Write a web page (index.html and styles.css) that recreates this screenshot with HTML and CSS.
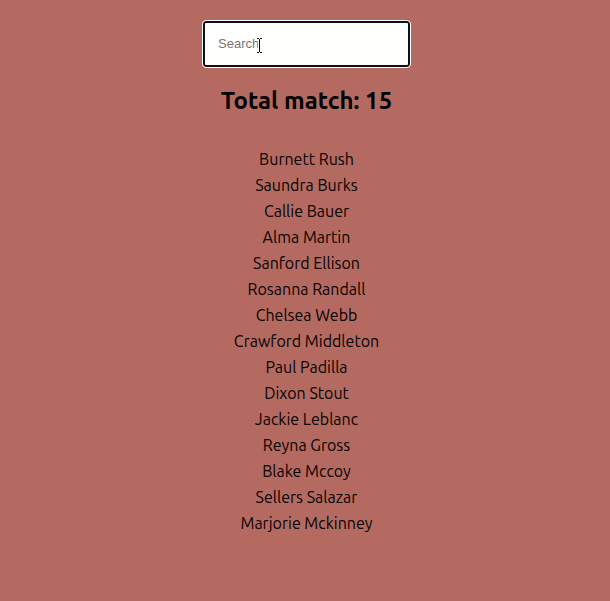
FILE: index.html
```html
<!DOCTYPE html>
<html lang="en">
<head>
<meta charset="utf-8">
<title>Search names</title>
<link rel="stylesheet" href="styles.css">
</head>
<body>
<main class="page">
  <div class="search">
    <input class="search-input" type="text" placeholder="Search" aria-label="Search">
    <svg class="cursor" viewBox="0 0 9 19" aria-hidden="true">
      <path class="cursor-halo" d="M2 2.5h5M4.5 2v15M2 16.5h5"/>
      <path class="cursor-line" d="M2 2.5h2M5 2.5h2M4.5 3v13M2 16.5h2M5 16.5h2"/>
    </svg>
  </div>
  <h2 class="total">Total match: 15</h2>
  <ul class="names">
    <li>Burnett Rush</li>
    <li>Saundra Burks</li>
    <li>Callie Bauer</li>
    <li>Alma Martin</li>
    <li>Sanford Ellison</li>
    <li>Rosanna Randall</li>
    <li>Chelsea Webb</li>
    <li>Crawford Middleton</li>
    <li>Paul Padilla</li>
    <li>Dixon Stout</li>
    <li>Jackie Leblanc</li>
    <li>Reyna Gross</li>
    <li>Blake Mccoy</li>
    <li>Sellers Salazar</li>
    <li>Marjorie Mckinney</li>
  </ul>
</main>
</body>
</html>
```
FILE: styles.css
```css
* {
  box-sizing: border-box;
}

body {
  margin: 0;
  background: #b46a60;
  color: #080202;
  font-family: Ubuntu, "Noto Sans", sans-serif;
  font-size: 16px;
  font-weight: 450;
}

.page {
  display: flex;
  flex-direction: column;
  align-items: center;
  padding: 21px 0 20px 3px;
}

.search {
  position: relative;
}

.search-input {
  display: block;
  width: 207px;
  height: 46px;
  padding: 0 13px 2px;
  border: 2px solid #101010;
  border-radius: 3px;
  outline: 1px solid #fff;
  background: #fffffd;
  font-family: "Liberation Sans", sans-serif;
  font-size: 13px;
}

.search-input::placeholder {
  color: #757575;
  opacity: 1;
}

.cursor {
  position: absolute;
  left: 52px;
  top: 15px;
  width: 9px;
  height: 19px;
  fill: none;
}

.cursor-halo {
  stroke: #fff;
  stroke-width: 3;
}

.cursor-line {
  stroke: #111;
  stroke-width: 1;
}

.total {
  margin: 20px 0;
  color: #000;
  font-size: 24px;
  line-height: 28px;
}

.names {
  margin: 0;
  padding: 11px 0;
  list-style: none;
  text-align: center;
  line-height: 26px;
}
```
